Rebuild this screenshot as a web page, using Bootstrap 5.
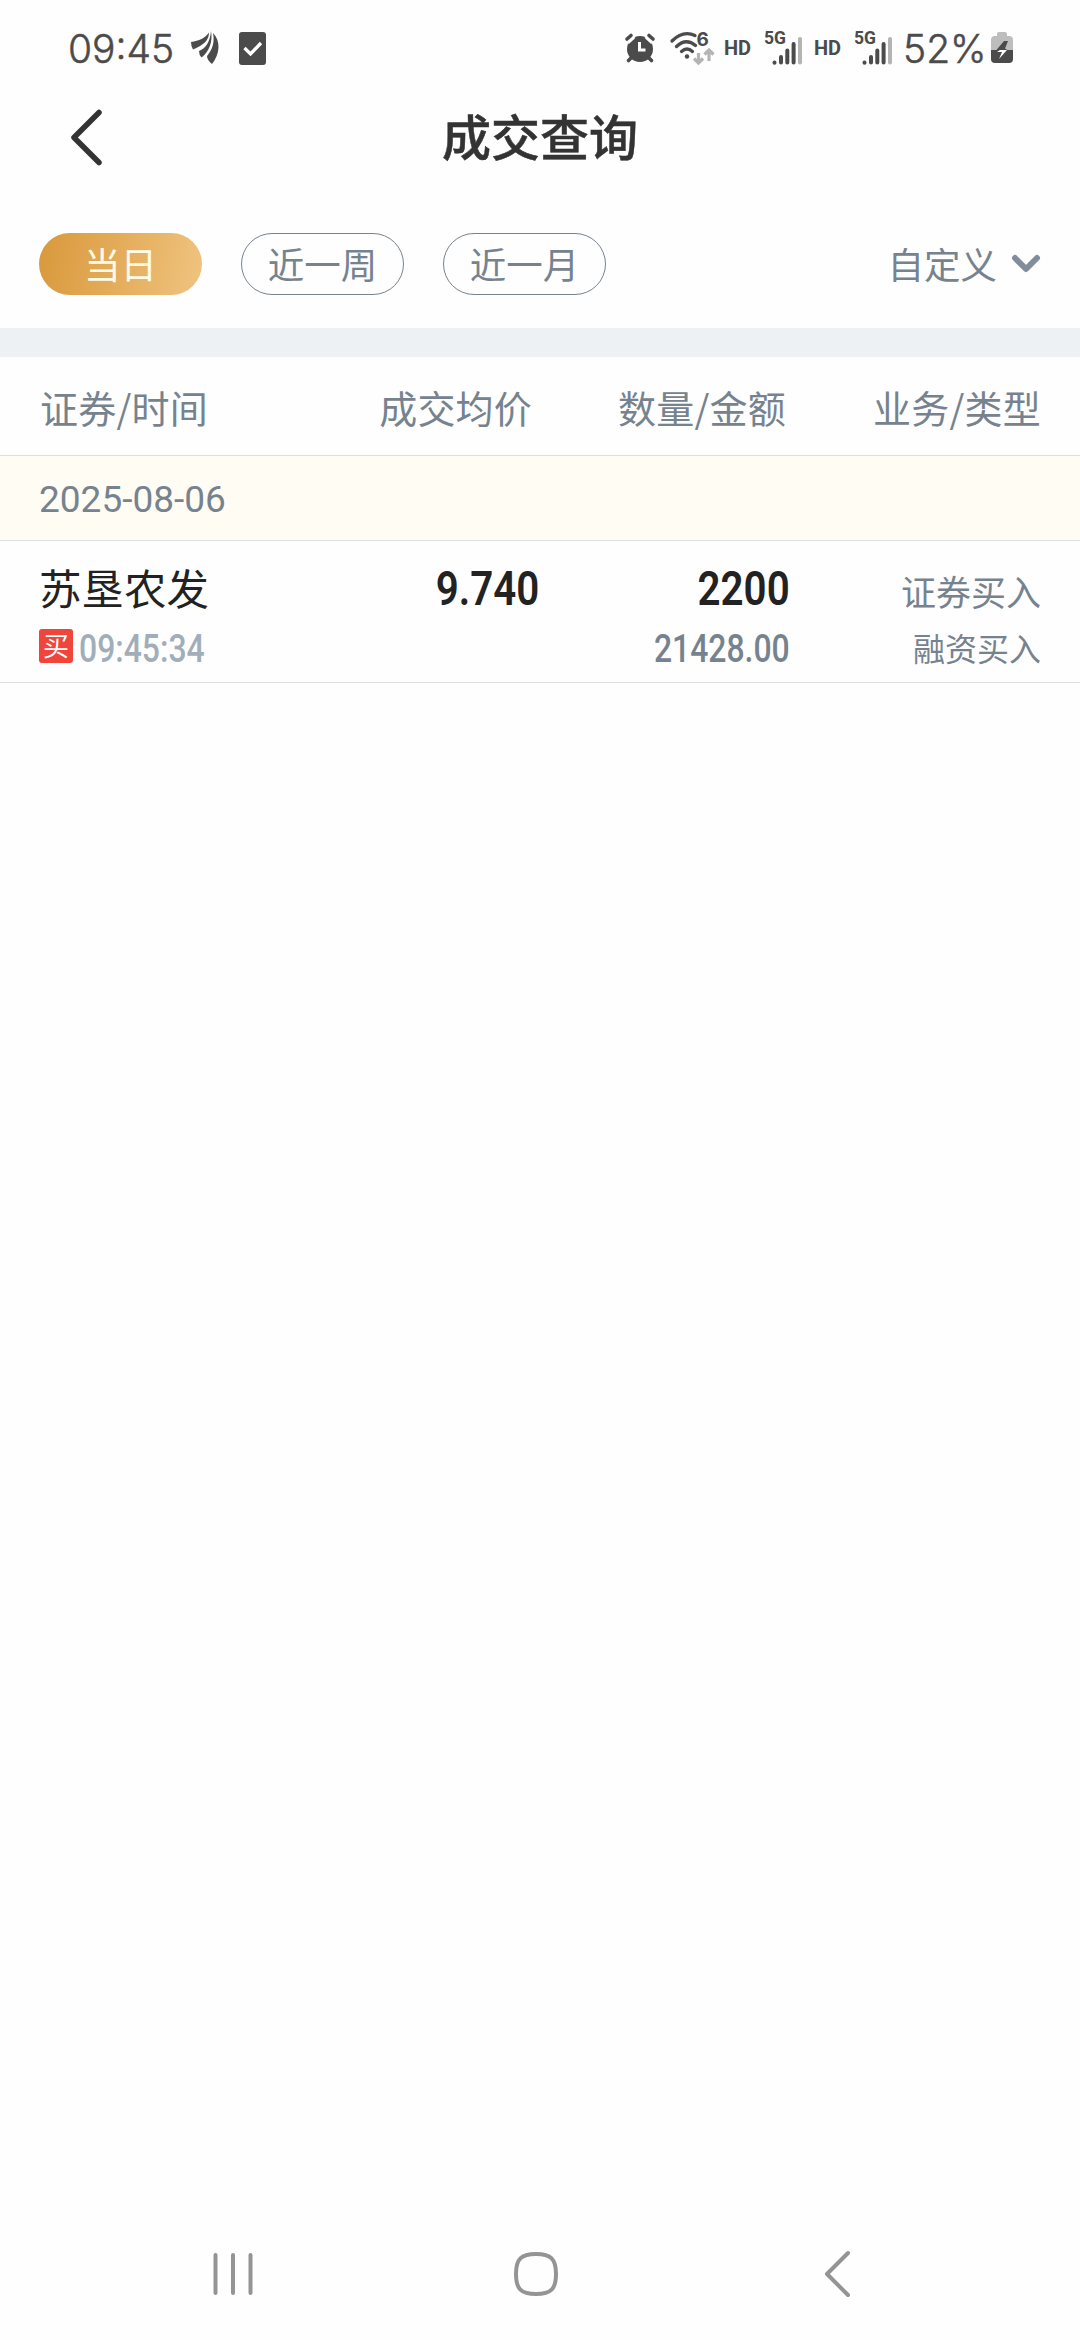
<!DOCTYPE html>
<html lang="zh-CN">
<head>
<meta charset="utf-8">
<meta name="viewport" content="width=device-width, initial-scale=1">
<title>成交查询</title>
<link rel="stylesheet" href="https://cdn.jsdelivr.net/npm/bootstrap@5.3.0/dist/css/bootstrap.min.css">
<style>
  body { font-family: Roboto, "Noto Sans CJK SC", sans-serif; color: #222; background: #fefefe; line-height: 1; }
  svg { display: block; flex: none; overflow: visible; }
  .screen { width: 1080px; height: 2340px; }
  .cjk { font-family: "Noto Sans CJK SC", sans-serif; }
  .slate { color: #76838f; }
  .status-bar { height: 92px; padding: 4px 67px 0 68px; color: #4b4b4b; }
  .clock { font: 300 39px/1 Inter, sans-serif; -webkit-text-stroke: .5px #4b4b4b; white-space: nowrap; }
  .leaf { margin-left: 17px; }
  .todo { margin-left: 20px; }
  .wifi { margin-left: 15px; }
  .hd-label { font: 700 20px/1 Roboto, sans-serif; width: 28px; }
  .hd-first { margin-left: 8px; }
  .hd-next { margin-left: 10px; }
  .cell { margin-left: 12px; }
  .pct { margin-left: 9px; width: 83px; }
  .battery { margin-left: 5px; }
  .title-bar { height: 92px; }
  .back-btn { width: 106px; padding-left: 69px; }
  .page-title { font-size: 49px; font-weight: 500; color: #333; padding-bottom: 8px; -webkit-text-stroke: .5px #333; }
  .filter-bar { height: 144px; padding: 16px 39px 0; gap: 39px; }
  .chip { width: 163px; height: 62px; font-size: 36.5px; border: 1px solid #76838f; border-radius: 31px; color: #76838f; }
  .chip.current { border: 0; color: #fffbe8; background: linear-gradient(100deg, #d9993c, #e3ab58 45%, #efc480); }
  .custom { font-size: 36.5px; gap: 14px; }
  .divider-band { height: 29px; background: #edf1f4; }
  .head-row { height: 99px; padding: 1px 39px 0 40px; font-size: 38px; letter-spacing: .2px; border-bottom: 1px solid #dcdfe0; }
  .date-row { height: 85px; padding: 2px 39px 0; font-size: 37px; background: #fffcf4; border-bottom: 1px solid #dcdfe0; }
  .trade-row { height: 142px; padding: 0 39px; border-bottom: 1px solid #dcdfe0; }
  .c1 { width: 219px; }
  .c2 { width: 273px; }
  .c3 { width: 254px; }
  .t1 { width: 219px; }
  .t2 { width: 281px; }
  .t3 { width: 251px; }
  .line-a { height: 48px; margin-top: 22px; }
  .line-b { height: 44px; margin-top: 13px; }
  .stock { font-size: 42.5px; }
  .din { display: inline-block; transform: scaleX(.84); transform-origin: right; white-space: nowrap; }
  .din-l { transform-origin: left; margin-left: 6px; color: #a1aeba; }
  .num-main { font-size: 48px; font-weight: 600; padding-top: 4px; }
  .num-sub { font-size: 38px; font-weight: 500; padding-top: 5px; }
  .biz { font-size: 35px; padding-top: 6px; }
  .kind { font-size: 32px; padding-top: 1px; }
  .buy-tag { width: 34px; height: 34px; margin-top: -1px; padding-bottom: 2px; border-radius: 3px; background: #f1443a; color: #fff; font-size: 26px; }
  .nav-keys { height: 132px; padding: 0 228px 0 212px; }
  .home-key { margin-right: 7px; }
</style>
<script src="https://cdn.jsdelivr.net/npm/bootstrap@5.3.0/dist/js/bootstrap.bundle.min.js"></script>
</head>
<body>
<main class="screen d-flex flex-column">
  <header class="status-bar d-flex align-items-center justify-content-between">
    <div class="d-flex align-items-center">
      <span class="clock">09:45</span>
      <svg class="leaf" width="28" height="34" viewBox="0 0 28 34" fill="#4b4b4b"><path d="M0 11C8 10 14 7 18 1.500C18 9 13 14 2 18.500Q0 15 0 11Z"/><path d="M20 0C22 11 18 21 10.500 26.500Q8 24 8 20C15 17 19 11 20 0Z"/><path d="M22 2C30 10 29 23 21 33Q16 29 16 25C21 19 24 12 22 2Z"/></svg>
      <svg class="todo" width="27" height="33" viewBox="0 0 27 33"><rect width="27" height="33" rx="3" fill="#4b4b4b"/><path d="M5.500 16l6 6 10.500-11" fill="none" stroke="#fff" stroke-width="3.300"/></svg>
    </div>
    <div class="d-flex align-items-center">
      <svg width="30" height="30" viewBox="0 0 30 30"><circle cx="15" cy="16" r="13" fill="#4b4b4b"/><g stroke="#fefefe" stroke-width="7"><path d="M1.500 8.500L8 2.500M28.500 8.500L22 2.500"/></g><g stroke="#4b4b4b" stroke-width="3.600" stroke-linecap="round"><path d="M2 6L6 2.500M28 6L24 2.500M6 25L3.500 27.500M24 25l2.500 2.500"/></g><path d="M14.500 9v8h6" fill="none" stroke="#fff" stroke-width="3"/></svg>
      <svg class="wifi" width="46" height="34" viewBox="0 0 46 34"><g fill="none" stroke="#4b4b4b" stroke-width="3.300" stroke-linecap="round"><path d="M2 10Q13-1 25 4.500M6.500 15.500Q16 6.500 25.500 14.500M11.500 20.500Q17 15.500 22.500 20.500"/></g><circle cx="17" cy="25.500" r="2.200" fill="#4b4b4b"/><text x="26.500" y="14.500" font-family="Inter, sans-serif" font-size="19" font-weight="700" fill="#4b4b4b">6</text><g fill="none" stroke="#b4b4b4" stroke-width="3.200"><path d="M28.500 22v9.500M24 27.500l4.500 4.500 4.500-4.500M39 30V20M34.500 23.500L39 19l4.500 4.500"/></g></svg>
      <span class="hd-label hd-first">HD</span>
      <svg class="cell" width="40" height="34" viewBox="0 0 40 34"><text x="0" y="13" font-family="Roboto, sans-serif" font-size="17.500" font-weight="700" fill="#4b4b4b">5G</text><g stroke="#4b4b4b" stroke-width="4" stroke-linecap="round"><path d="M10.500 31.500v.2M17 26v5.500M23.300 19.500v12M29.600 13v18.500"/><path d="M36 8v23.500" stroke="#b4b4b4"/></g></svg>
      <span class="hd-label hd-next">HD</span>
      <svg class="cell" width="40" height="34" viewBox="0 0 40 34"><text x="0" y="13" font-family="Roboto, sans-serif" font-size="17.500" font-weight="700" fill="#4b4b4b">5G</text><g stroke="#4b4b4b" stroke-width="4" stroke-linecap="round"><path d="M10.500 31.500v.2M17 26v5.500M23.300 19.500v12M29.600 13v18.500"/><path d="M36 8v23.500" stroke="#b4b4b4"/></g></svg>
      <span class="clock pct">52%</span>
      <svg class="battery" width="22" height="32" viewBox="0 0 22 32"><path d="M6 4V2q0-2 2-2h6q2 0 2 2v2h2q4 0 4 4v10H0V8q0-4 4-4Z" fill="#bdbdbd"/><path d="M0 18h22v9q0 4-4 4H4q-4 0-4-4Z" fill="#4b4b4b"/><path d="M13 9L5 18.500h12L14 16.500 17 9Z" fill="#4b4b4b"/><path d="M9 18h7L8 27l3-7H6Z" fill="#fff"/></svg>
    </div>
  </header>
  <nav class="title-bar d-flex align-items-center">
    <div class="back-btn"><svg width="36" height="60" viewBox="0 0 36 60" fill="none" stroke="#333" stroke-width="5.500" stroke-linecap="round" stroke-linejoin="round"><path d="M30 4.500L5 29.500 30 54.500"/></svg></div>
    <div class="page-title cjk flex-fill text-center">成交查询</div>
    <div class="back-btn"></div>
  </nav>
  <section class="filter-bar cjk d-flex align-items-center">
    <div class="chip current d-flex align-items-center justify-content-center">当日</div>
    <div class="chip d-flex align-items-center justify-content-center">近一周</div>
    <div class="chip d-flex align-items-center justify-content-center">近一月</div>
    <div class="custom slate ms-auto d-flex align-items-center"><span>自定义</span>
      <svg width="30" height="20" viewBox="0 0 30 20" fill="none" stroke="#818d9a" stroke-width="6" stroke-linecap="round" stroke-linejoin="round"><path d="M4 4l11 11L26 4"/></svg></div>
  </section>
  <div class="divider-band"></div>
  <section>
    <div class="head-row cjk slate d-flex align-items-center">
      <div class="c1">证券/时间</div>
      <div class="c2 text-end">成交均价</div>
      <div class="c3 text-end">数量/金额</div>
      <div class="flex-fill text-end">业务/类型</div>
    </div>
    <div class="date-row slate d-flex align-items-center">2025-08-06</div>
    <div class="trade-row d-flex">
      <div class="t1">
        <div class="line-a stock cjk d-flex align-items-center">苏垦农发</div>
        <div class="line-b d-flex align-items-center"><span class="buy-tag cjk d-flex align-items-center justify-content-center">买</span><span class="din din-l num-sub">09:45:34</span></div>
      </div>
      <div class="t2 text-end">
        <div class="line-a d-flex align-items-center justify-content-end"><span class="din num-main">9.740</span></div>
      </div>
      <div class="t3 text-end">
        <div class="line-a d-flex align-items-center justify-content-end"><span class="din num-main">2200</span></div>
        <div class="line-b slate d-flex align-items-center justify-content-end"><span class="din num-sub">21428.00</span></div>
      </div>
      <div class="flex-fill cjk slate">
        <div class="line-a biz d-flex align-items-center justify-content-end">证券买入</div>
        <div class="line-b kind d-flex align-items-center justify-content-end">融资买入</div>
      </div>
    </div>
  </section>
  <footer class="nav-keys mt-auto d-flex align-items-center justify-content-between">
    <svg width="42" height="46" viewBox="0 0 42 46" stroke="#949494" stroke-width="4" stroke-linecap="round"><path d="M3.500 4v38M21 4v38M38.500 4v38"/></svg>
    <svg class="home-key" width="46" height="46" viewBox="0 0 46 46" fill="none" stroke="#949494" stroke-width="4"><path d="M23 3C38 3 43 8 43 23S38 43 23 43 3 38 3 23 8 3 23 3Z"/></svg>
    <svg width="28" height="50" viewBox="0 0 28 50" fill="none" stroke="#949494" stroke-width="4" stroke-linecap="round" stroke-linejoin="round"><path d="M24 4L3 25l21 21"/></svg>
  </footer>
</main>
</body>
</html>
